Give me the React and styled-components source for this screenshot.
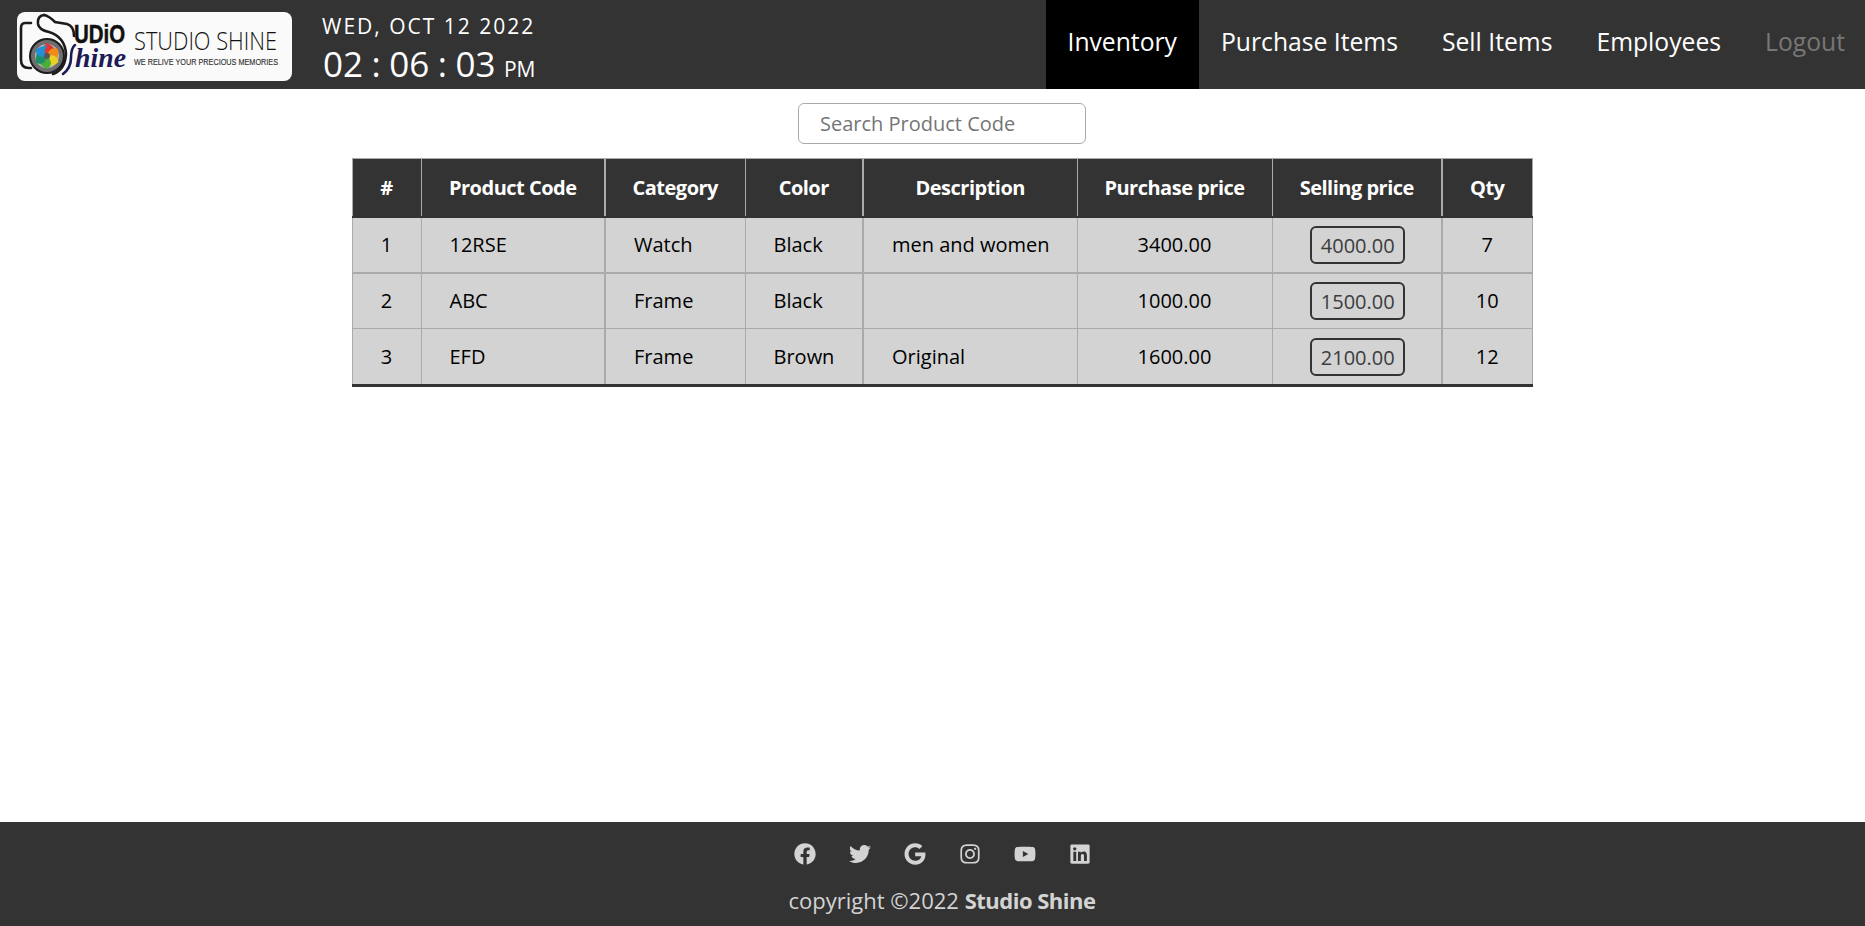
import styled, { createGlobalStyle } from "styled-components";
import {
  FaFacebook,
  FaTwitter,
  FaGoogle,
  FaInstagram,
  FaYoutube,
  FaLinkedin,
} from "react-icons/fa";

const GlobalStyle = createGlobalStyle`
  * { box-sizing: border-box; }
  html, body { margin: 0; padding: 0; background: #fff; }
  body { font-family: "Open Sans", "Noto Sans", sans-serif; color: #000; }
`;

const Page = styled.div`
  min-height: 100vh;
  display: flex;
  flex-direction: column;
`;

const Header = styled.header`
  height: 89px;
  background: #333;
  display: flex;
  align-items: stretch;
  justify-content: space-between;
`;

const Brand = styled.div`
  display: flex;
  align-items: center;
  padding-left: 17px;
`;

const LogoBox = styled.div`
  width: 275px;
  height: 69px;
  margin-top: 4px;
  background: #fafafa;
  border-radius: 8px;
  svg { display: block; overflow: visible; }
`;

const Clock = styled.div`
  align-self: flex-start;
  padding-top: 13px;
  margin-left: 30px;
  color: #fff;
  display: flex;
  flex-direction: column;
`;

const DateLine = styled.div`
  font-size: 21px;
  line-height: 27px;
  letter-spacing: 2px;
`;

const TimeLine = styled.div`
  font-size: 35px;
  line-height: 48px;
  word-spacing: -0.6px;
  padding-left: 1px;
`;

const Meridiem = styled.span`
  font-size: 21px;
`;

const Nav = styled.nav`
  display: flex;
  align-items: stretch;
`;

const NavLink = styled.a`
  display: flex;
  align-items: center;
  padding: 0 22px 7px;
  font-size: 24.7px;
  color: ${(p) => (p.$muted ? "#777" : "#fff")};
  background: ${(p) => (p.$active ? "#000" : "transparent")};
  &:last-child { padding-right: 20px; }
`;

const Main = styled.main`
  flex: 1;
  display: flex;
  flex-direction: column;
  align-items: center;
  padding-left: 19px;
`;

const Search = styled.input`
  width: 288px;
  height: 41px;
  margin-top: 14px;
  padding: 0 21px;
  border: 1px solid #aaa;
  border-radius: 6px;
  font-family: inherit;
  font-size: 20px;
  outline: none;
  &::placeholder { color: #757575; opacity: 1; }
`;

const Table = styled.table`
  width: 1180px;
  table-layout: fixed;
  margin-top: 14px;
  border-collapse: collapse;
  font-size: 20px;
  border-bottom: 3px solid #333;
  tbody tr:last-child td { height: 57px; }
`;

const Col = styled.col`
  width: ${(p) => p.$width}px;
`;

const Th = styled.th`
  height: 58px;
  padding: 0;
  background: #333;
  color: #fff;
  font-weight: 700;
  letter-spacing: -0.5px;
  text-align: center;
  white-space: nowrap;
  border: 1px solid #aaa;
  border-left-width: ${(p) => (p.$thick ? "2px" : "1px")};
  border-bottom: 2px solid #333;
`;

const Td = styled.td`
  height: 56px;
  padding: 0 ${(p) => (p.$center ? "0" : "28px")};
  background: #d3d3d3;
  text-align: ${(p) => (p.$center ? "center" : "left")};
  white-space: nowrap;
  border: 1px solid #aaa;
  border-left-width: ${(p) => (p.$thick ? "2px" : "1px")};
`;

const Row = styled.tr`
  ${(p) => p.$thick && "td { border-bottom-width: 2px; }"}
`;

const PriceChip = styled.span`
  display: inline-block;
  width: 95px;
  height: 38px;
  margin-left: 2px;
  vertical-align: middle;
  text-align: center;
  color: #3c3c3c;
  border: 2px solid #333;
  border-radius: 6px;
  font-size: 20px;
  line-height: 35px;
`;

const Footer = styled.footer`
  height: 104px;
  padding-left: 19px;
  background: #333;
  color: #d3d3d3;
  display: flex;
  flex-direction: column;
  align-items: center;
`;

const Socials = styled.div`
  display: flex;
  gap: 33px;
  margin-top: 21px;
  font-size: 22px;
  line-height: 0;
`;

const Copyright = styled.div`
  margin-top: 20px;
  font-size: 22px;
  line-height: 30px;
  b { letter-spacing: -0.5px; }
`;

const blades = ["#e5352b", "#f08a1d", "#e8d21f", "#4aad3c", "#1c8f6a", "#1f8fd6"];

const Logo = () => (
  <svg width="275" height="69" viewBox="0 0 275 69">
    <g fill="none" stroke="#1c1c1c" strokeWidth="2.6" strokeLinecap="round">
      <path d="M14 11 H8 Q4 11 4 16 V48 Q4 56 12 56 H14" />
      <path d="M27 3 Q20 4 21 12 Q22 18 32 20 Q48 25 49 42 Q48 58 36 62" />
      <path d="M27 3 Q32 4 38 10 L50 12 Q57 14 57 24" />
      <path d="M58 33 Q54 36 54 46 Q54 56 46 62" stroke="#1d1a55" />
    </g>
    <circle cx="30" cy="44" r="17" fill="#6e6e6e" stroke="#1c1c1c" strokeWidth="2" />
    <circle cx="30" cy="44" r="12" fill="#b9b9b9" />
    {blades.map((color, i) => (
      <path
        key={color}
        d="M30 44 Q32 34 41 37 Q42 43 39 50 Q37 43 30 44 Z"
        fill={color}
        transform={`rotate(${i * 60 - 60} 30 44)`}
      />
    ))}
    <circle cx="30" cy="44" r="3" fill="#555" />
    <text x="57" y="31" fontFamily="Liberation Sans, sans-serif" fontWeight="700" fontSize="25" fill="#111" stroke="#111" strokeWidth="0.5" textLength="51" lengthAdjust="spacingAndGlyphs">UDiO</text>
    <text x="58" y="55" fontFamily="Liberation Serif, serif" fontStyle="italic" fontWeight="700" fontSize="27" fill="#1d1a55" textLength="51" lengthAdjust="spacingAndGlyphs">hine</text>
    <text x="117" y="38" fontFamily="Open Sans, sans-serif" fontWeight="300" fontSize="25" fill="#111" textLength="143" lengthAdjust="spacingAndGlyphs">STUDIO SHINE</text>
    <text x="117" y="53" fontFamily="Liberation Sans, sans-serif" fontSize="9" fill="#333" stroke="#333" strokeWidth="0.15" textLength="144" lengthAdjust="spacingAndGlyphs">WE RELIVE YOUR PRECIOUS MEMORIES</text>
  </svg>
);

const products = [
  { id: 1, code: "12RSE", category: "Watch", color: "Black", description: "men and women", purchase: "3400.00", selling: "4000.00", qty: 7 },
  { id: 2, code: "ABC", category: "Frame", color: "Black", description: "", purchase: "1000.00", selling: "1500.00", qty: 10 },
  { id: 3, code: "EFD", category: "Frame", color: "Brown", description: "Original", purchase: "1600.00", selling: "2100.00", qty: 12 },
];

// thick: these column lines land on two pixels in the reference
const columns = [
  { title: "#", width: 69 },
  { title: "Product Code", width: 184 },
  { title: "Category", width: 140, thick: true },
  { title: "Color", width: 118 },
  { title: "Description", width: 214, thick: true },
  { title: "Purchase price", width: 195 },
  { title: "Selling price", width: 170 },
  { title: "Qty", width: 90, thick: true },
];

const links = ["Inventory", "Purchase Items", "Sell Items", "Employees"];

export default function App() {
  return (
    <Page>
      <GlobalStyle />
      <Header>
        <Brand>
          <LogoBox>
            <Logo />
          </LogoBox>
          <Clock>
            <DateLine>WED, OCT 12 2022</DateLine>
            <TimeLine>
              02 : 06 : 03 <Meridiem>PM</Meridiem>
            </TimeLine>
          </Clock>
        </Brand>
        <Nav>
          {links.map((link, i) => (
            <NavLink key={link} $active={i === 0}>
              {link}
            </NavLink>
          ))}
          <NavLink $muted>Logout</NavLink>
        </Nav>
      </Header>
      <Main>
        <Search placeholder="Search Product Code" />
        <Table>
          <colgroup>
            {columns.map((col) => (
              <Col key={col.title} $width={col.width} />
            ))}
          </colgroup>
          <thead>
            <tr>
              {columns.map((col) => (
                <Th key={col.title} $thick={col.thick}>
                  {col.title}
                </Th>
              ))}
            </tr>
          </thead>
          <tbody>
            {products.map((p) => (
              <Row key={p.id} $thick={p.id === 1}>
                <Td $center>{p.id}</Td>
                <Td>{p.code}</Td>
                <Td $thick>{p.category}</Td>
                <Td>{p.color}</Td>
                <Td $thick>{p.description}</Td>
                <Td $center>{p.purchase}</Td>
                <Td $center>
                  <PriceChip>{p.selling}</PriceChip>
                </Td>
                <Td $center $thick>
                  {p.qty}
                </Td>
              </Row>
            ))}
          </tbody>
        </Table>
      </Main>
      <Footer>
        <Socials>
          <FaFacebook />
          <FaTwitter />
          <FaGoogle />
          <FaInstagram />
          <FaYoutube />
          <FaLinkedin />
        </Socials>
        <Copyright>
          copyright ©2022 <b>Studio Shine</b>
        </Copyright>
      </Footer>
    </Page>
  );
}
